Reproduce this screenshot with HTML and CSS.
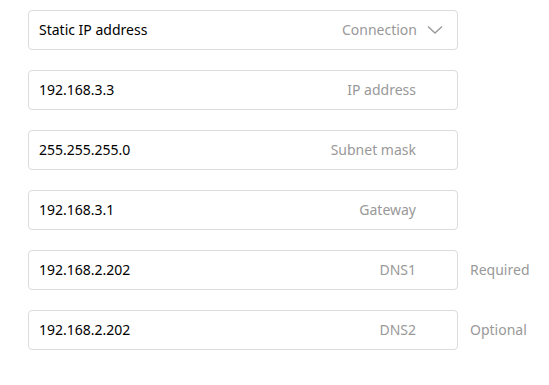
FILE: index.html
```html
<!DOCTYPE html>
<html>
<head>
<meta charset="utf-8">
<link rel="stylesheet" href="styles.css">
</head>
<body>
<div class="form">
  <div class="row">
    <div class="field">
      <span class="value">Static IP address</span>
      <span class="label">Connection</span>
      <svg class="chev" width="16" height="10" viewBox="0 0 16 10"><path d="M1 1.5 L8 8 L15 1.5" fill="none" stroke="#999" stroke-width="1.4"/></svg>
    </div>
  </div>
  <div class="row">
    <div class="field"><span class="value">192.168.3.3</span><span class="label pad">IP address</span></div>
  </div>
  <div class="row">
    <div class="field"><span class="value">255.255.255.0</span><span class="label pad">Subnet mask</span></div>
  </div>
  <div class="row">
    <div class="field"><span class="value">192.168.3.1</span><span class="label pad">Gateway</span></div>
  </div>
  <div class="row">
    <div class="field"><span class="value">192.168.2.202</span><span class="label pad">DNS1</span></div>
    <span class="hint">Required</span>
  </div>
  <div class="row">
    <div class="field"><span class="value">192.168.2.202</span><span class="label pad">DNS2</span></div>
    <span class="hint">Optional</span>
  </div>
</div>
</body>
</html>
```
FILE: styles.css
```css
html, body { margin: 0; padding: 0; background: #fff; }
body { font-family: "Noto Sans", "Open Sans", sans-serif; font-size: 14px; }
.form { display: flex; flex-direction: column; gap: 20px; padding: 10px 0 0 28px; }
.row { display: flex; align-items: center; gap: 12px; }
.field {
  box-sizing: border-box;
  width: 430px; height: 40px;
  border: 1px solid #dcdcdc; border-radius: 4px;
  display: flex; align-items: center;
  padding: 0 14px 2px 10px;
}
.value { color: #000; flex: 1; }
.label { color: #999; }
.label.pad { margin-right: 27px; }
.chev { margin-left: 10px; margin-top: 2px; }
.hint { color: #999; padding-bottom: 2px; }
```
